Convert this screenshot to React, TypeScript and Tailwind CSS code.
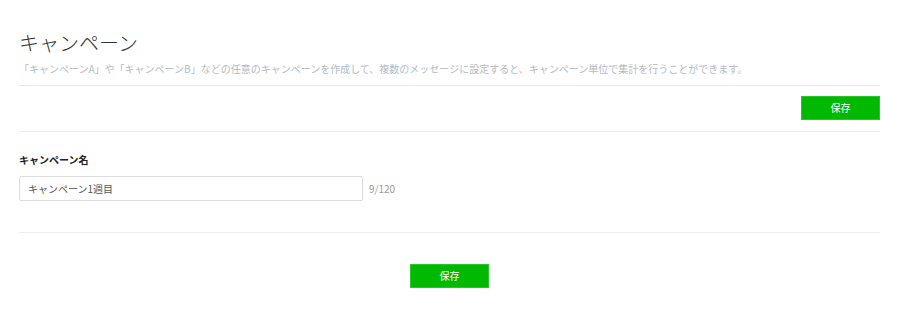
import React from "react";

export default function App() {
  const font = { fontFamily: '"Noto Sans CJK JP", "Noto Sans", "Liberation Sans", sans-serif' };
  return (
    <div className="w-[900px] h-[309px] bg-white pl-[19px] pr-[20px] pt-[31px]" style={font}>
      <h1 className="text-[20px] leading-[24px] font-light text-[#333]">キャンペーン</h1>
      <p className="mt-[7px] text-[10px] leading-[14px] text-[#b5bac3]">
        「キャンペーンA」や「キャンペーンB」などの任意のキャンペーンを作成して、複数のメッセージに設定すると、キャンペーン単位で集計を行うことができます。
      </p>
      <div className="mt-[9px] border-t border-[#e9e9e9]" />
      <div className="flex justify-end pt-[10px] pb-[11px]">
        <button className="w-[79px] h-[24px] bg-[#00b900] border border-[#2cc42c] text-white text-[10px] leading-none">
          保存
        </button>
      </div>
      <div className="border-t border-[#eeeeee]" />
      <div className="pt-[20px]">
        <div className="text-[10px] leading-[16px] font-bold text-[#222]">キャンペーン名</div>
        <div className="mt-[8px] flex items-center">
          <div className="w-[344px] h-[25px] border border-[#dcdcdc] rounded-[2px] flex items-center px-[8px] text-[10px] text-[#555]">
            キャンペーン1週目
          </div>
          <span className="ml-[6px] text-[10px] text-[#9a9a9a]">9/120</span>
        </div>
      </div>
      <div className="mt-[31px] border-t border-[#eeeeee]" />
      <div className="flex justify-center pt-[31px]">
        <button className="w-[79px] h-[24px] bg-[#00b900] border border-[#2cc42c] text-white text-[10px] leading-none">
          保存
        </button>
      </div>
    </div>
  );
}
